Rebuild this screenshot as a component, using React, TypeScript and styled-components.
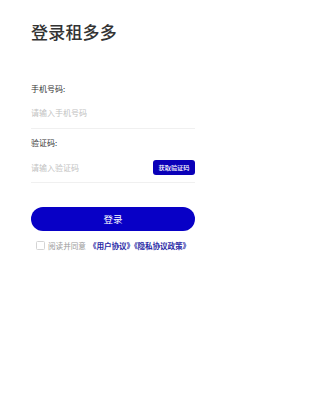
import React, { useState } from "react";
import styled, { createGlobalStyle } from "styled-components";

const GlobalStyle = createGlobalStyle`
  html, body {
    margin: 0;
    padding: 0;
    background: #fff;
  }
  body {
    font-family: "Noto Sans CJK SC", "Noto Sans", sans-serif;
  }
`;

const Page = styled.div`
  width: 225px;
  min-height: 400px;
  box-sizing: border-box;
  padding: 23px 30px 0 31px;
  background: #fff;
`;

const Title = styled.h1`
  margin: 0;
  font-size: 17px;
  line-height: 17px;
  font-weight: 500;
  color: #333;
  letter-spacing: 0.2px;
`;

const Form = styled.div`
  margin-top: 42.5px;
  display: flex;
  flex-direction: column;
  gap: 8.5px;
`;

const Field = styled.div`
  display: flex;
  flex-direction: column;
  gap: 3px;
`;

const Label = styled.label`
  font-size: 8px;
  line-height: 12px;
  color: #333;
`;

const InputRow = styled.div`
  height: 30px;
  display: flex;
  align-items: center;
  justify-content: space-between;
  border-bottom: 1px solid #f0f0f0;
`;

const Input = styled.input`
  flex: 1;
  min-width: 0;
  border: none;
  outline: none;
  padding: 0;
  background: transparent;
  font-family: inherit;
  font-size: 8px;
  color: #333;

  &::placeholder {
    color: #c2c2c2;
  }
`;

const CodeButton = styled.button`
  width: 42px;
  height: 15px;
  padding: 0;
  border: none;
  border-radius: 3px;
  background: #0a00b8;
  color: #fff;
  font-family: inherit;
  font-size: 6.2px;
  font-weight: 500;
  cursor: pointer;
`;

const LoginButton = styled.button`
  margin-top: 24px;
  width: 100%;
  height: 24px;
  border: none;
  border-radius: 12px;
  background: #0800c6;
  color: #fff;
  font-family: inherit;
  font-size: 9.5px;
  cursor: pointer;
`;

const Agreement = styled.div`
  margin-top: 8.5px;
  padding-left: 5px;
  display: flex;
  align-items: center;
  font-size: 7.6px;
  line-height: 12px;
  color: #999;
`;

const Check = styled.span<{ $checked: boolean }>`
  width: 7px;
  height: 7px;
  margin-right: 3px;
  border: 1px solid #d4d4d4;
  border-radius: 1.5px;
  background: ${(p) => (p.$checked ? "#0800c6" : "#fff")};
  cursor: pointer;
`;

const Link = styled.span`
  margin-left: 3px;
  color: #2a2aa6;
  font-weight: 700;
  letter-spacing: -0.1px;
`;

const App: React.FC = () => {
  const [agreed, setAgreed] = useState(false);

  return (
    <Page>
      <GlobalStyle />
      <Title>登录租多多</Title>
      <Form>
        <Field>
          <Label>手机号码:</Label>
          <InputRow>
            <Input placeholder="请输入手机号码" />
          </InputRow>
        </Field>
        <Field>
          <Label>验证码:</Label>
          <InputRow>
            <Input placeholder="请输入验证码" />
            <CodeButton>获取验证码</CodeButton>
          </InputRow>
        </Field>
      </Form>
      <LoginButton>登录</LoginButton>
      <Agreement>
        <Check $checked={agreed} onClick={() => setAgreed(!agreed)} />
        阅读并同意
        <Link>《用户协议》《隐私协议政策》</Link>
      </Agreement>
    </Page>
  );
};

export default App;
